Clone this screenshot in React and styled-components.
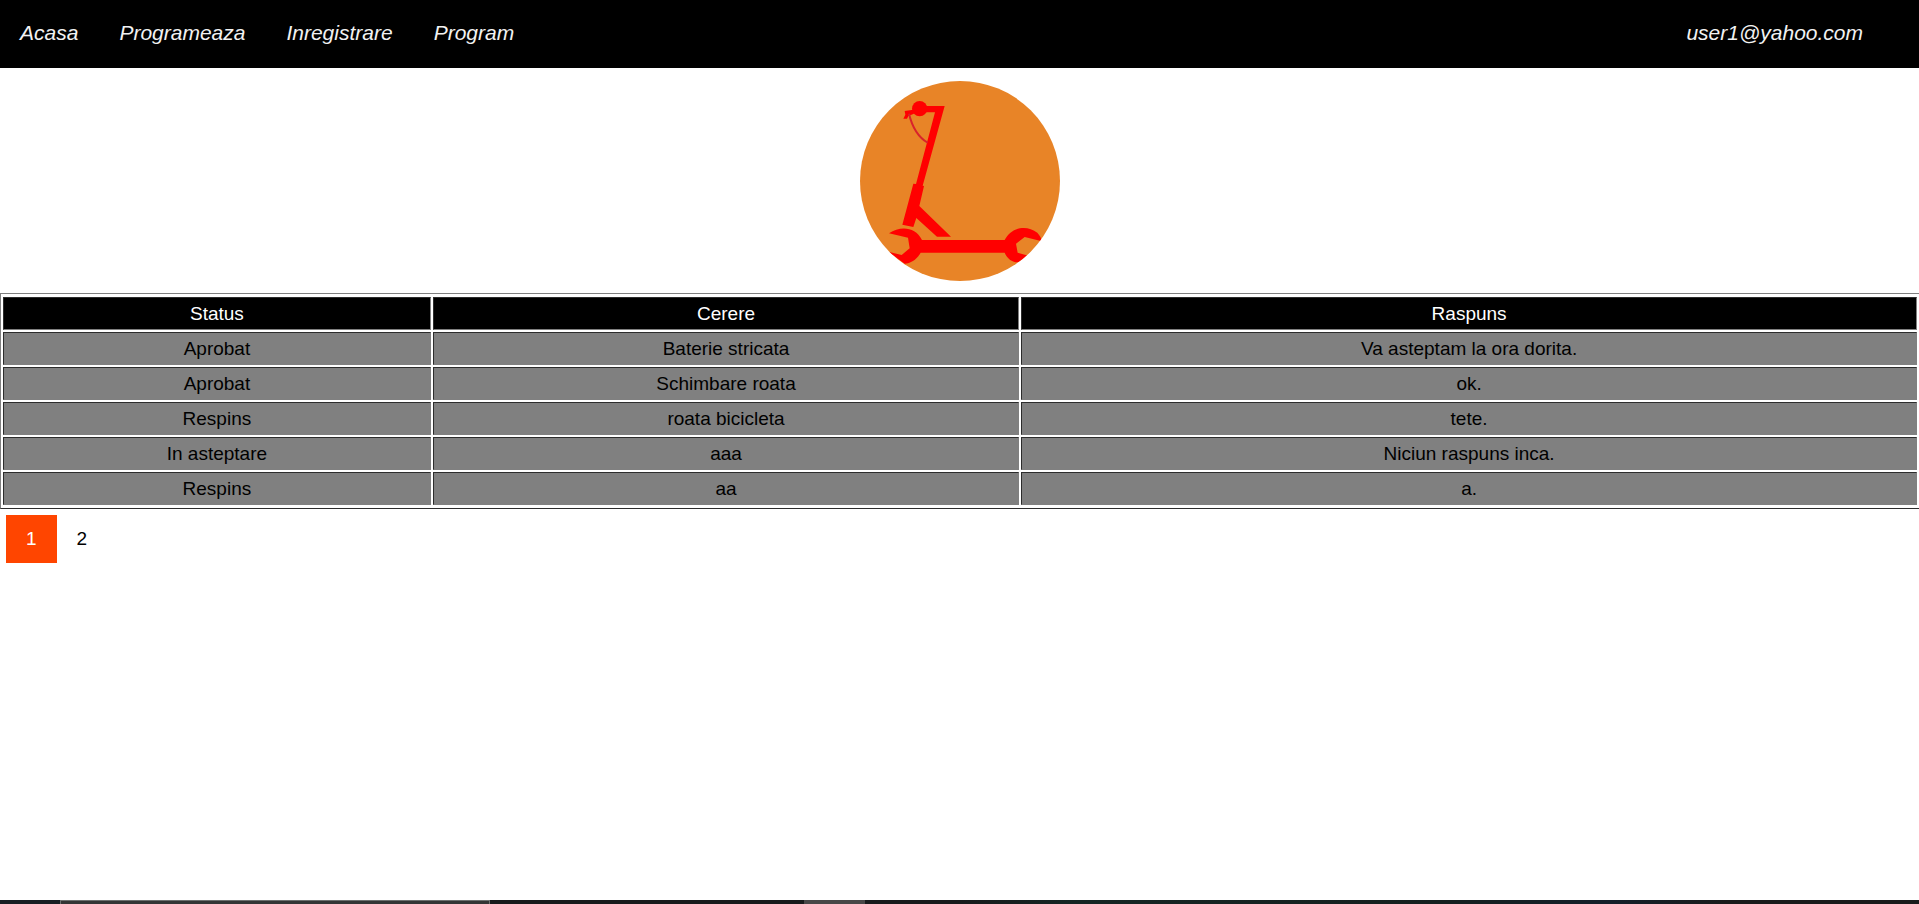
import React from "react";
import styled, { createGlobalStyle } from "styled-components";

const GlobalStyle = createGlobalStyle`
  body {
    margin: 0;
    background: #fff;
    color: #000;
    font-family: Arial, "Liberation Sans", sans-serif;
    font-size: 19px;
    line-height: 21px;
  }
`;

const Page = styled.div`
  display: flex;
  flex-direction: column;
  min-height: 100vh;
`;

const NavBar = styled.nav`
  display: flex;
  justify-content: space-between;
  padding-right: 36px;
  background: #000;
`;

const NavGroup = styled.div`
  display: flex;
  gap: 1px;
`;

const NavLink = styled.a`
  padding: 21px 20px 23px;
  color: #f2f2f2;
  font-size: 21px;
  font-style: italic;
  line-height: 24px;
  text-decoration: none;
`;

const Logo = styled.svg`
  display: block;
  width: 200px;
  height: 200px;
  margin: 13px auto 12px;
`;

const RequestTable = styled.table`
  width: 100%;
  padding: 1px 0;
  border: 1px solid;
  border-color: #808080 transparent #2c2c2c #808080;
  border-right: 0;
  border-spacing: 2px;
  table-layout: fixed;
  text-align: center;
`;

const Column = styled.col`
  width: ${(p) => p.$width};
`;

const cell = `
  padding: 5px;
  border: 1px solid;
  border-color: #2c2c2c #808080 #808080 #2c2c2c;
`;

const HeadCell = styled.th`
  ${cell}
  background: #000;
  color: #fff;
  font-weight: normal;
`;

const Cell = styled.td`
  ${cell}
  background: #808080;
`;

const Pagination = styled.nav`
  display: flex;
  padding: 6px;
`;

const PageLink = styled.a`
  padding: 13px 20px 14px;
  background: ${(p) => (p.$active ? "#ff4500" : "transparent")};
  color: ${(p) => (p.$active ? "#fff" : "#000")};
  text-decoration: none;
`;

const TaskBar = styled.footer`
  display: flex;
  height: 4px;
  margin-top: auto;
  background: linear-gradient(90deg, #171b1c 0 50%, #152624 56%, #14201f 75%, #14202a 84%, #191b1b 90%);
`;

const TaskSlot = styled.div`
  box-sizing: border-box;
  flex: 0 0 ${(p) => p.$width};
  background: ${(p) => p.$color || "transparent"};
  border: 0 solid #6c706f;
  border-width: ${(p) => (p.$outlined ? "1px 1px 0" : "0")};
`;

const links = ["Acasa", "Programeaza", "Inregistrare", "Program"];

const requests = [
  ["Aprobat", "Baterie stricata", "Va asteptam la ora dorita."],
  ["Aprobat", "Schimbare roata", "ok."],
  ["Respins", "roata bicicleta", "tete."],
  ["In asteptare", "aaa", "Niciun raspuns inca."],
  ["Respins", "aa", "a."],
];

function ScooterLogo() {
  return (
    <Logo viewBox="0 0 600 600" role="img" aria-label="Scooter">
      <clipPath id="disc">
        <circle cx="300" cy="300" r="300" />
      </clipPath>
      <circle cx="300" cy="300" r="300" fill="#e88427" />
      <g clipPath="url(#disc)" fill="#f00">
        <circle cx="179" cy="83" r="23" />
        <path d="M198 75H254L188 314L192 315L178 375L273 467H231L169 411L160 438L127 431L160 308L168 309L225 94H198Z" />
        <path d="M160 86L134 90L136 101L130 113L141 113L145 105L162 98Z" />
        <path d="M147 98Q162 161 203 185" fill="none" stroke="#d8232b" strokeWidth="6" />
        <path d="M87 457C121 434 166 437 186 477H434C454 438 500 430 532 455C540 464 544 472 546 481L494 468L468 488L473 515L505 524C486 554 448 549 434 515H182C170 536 153 547 134 548L85 512L125 522L149 502L144 470Z" />
      </g>
    </Logo>
  );
}

export default function App() {
  return (
    <Page>
      <GlobalStyle />
      <NavBar>
        <NavGroup>
          {links.map((label) => (
            <NavLink href="#" key={label}>{label}</NavLink>
          ))}
        </NavGroup>
        <NavLink href="#">user1@yahoo.com</NavLink>
      </NavBar>
      <ScooterLogo />
      <RequestTable>
        <colgroup>
          <Column $width="22.4%" />
          <Column $width="30.7%" />
          <Column $width="46.9%" />
        </colgroup>
        <thead>
          <tr>
            <HeadCell scope="col">Status</HeadCell>
            <HeadCell scope="col">Cerere</HeadCell>
            <HeadCell scope="col">Raspuns</HeadCell>
          </tr>
        </thead>
        <tbody>
          {requests.map((row, i) => (
            <tr key={i}>
              {row.map((text) => (
                <Cell key={text}>{text}</Cell>
              ))}
            </tr>
          ))}
        </tbody>
      </RequestTable>
      <Pagination aria-label="Pagini">
        <PageLink href="#" $active aria-current="page">1</PageLink>
        <PageLink href="#">2</PageLink>
      </Pagination>
      <TaskBar>
        <TaskSlot $width="60px" $color="#171d22" />
        <TaskSlot $width="430px" $color="#333535" $outlined />
        <TaskSlot $width="314px" />
        <TaskSlot $width="61px" $color="#484848" />
      </TaskBar>
    </Page>
  );
}
